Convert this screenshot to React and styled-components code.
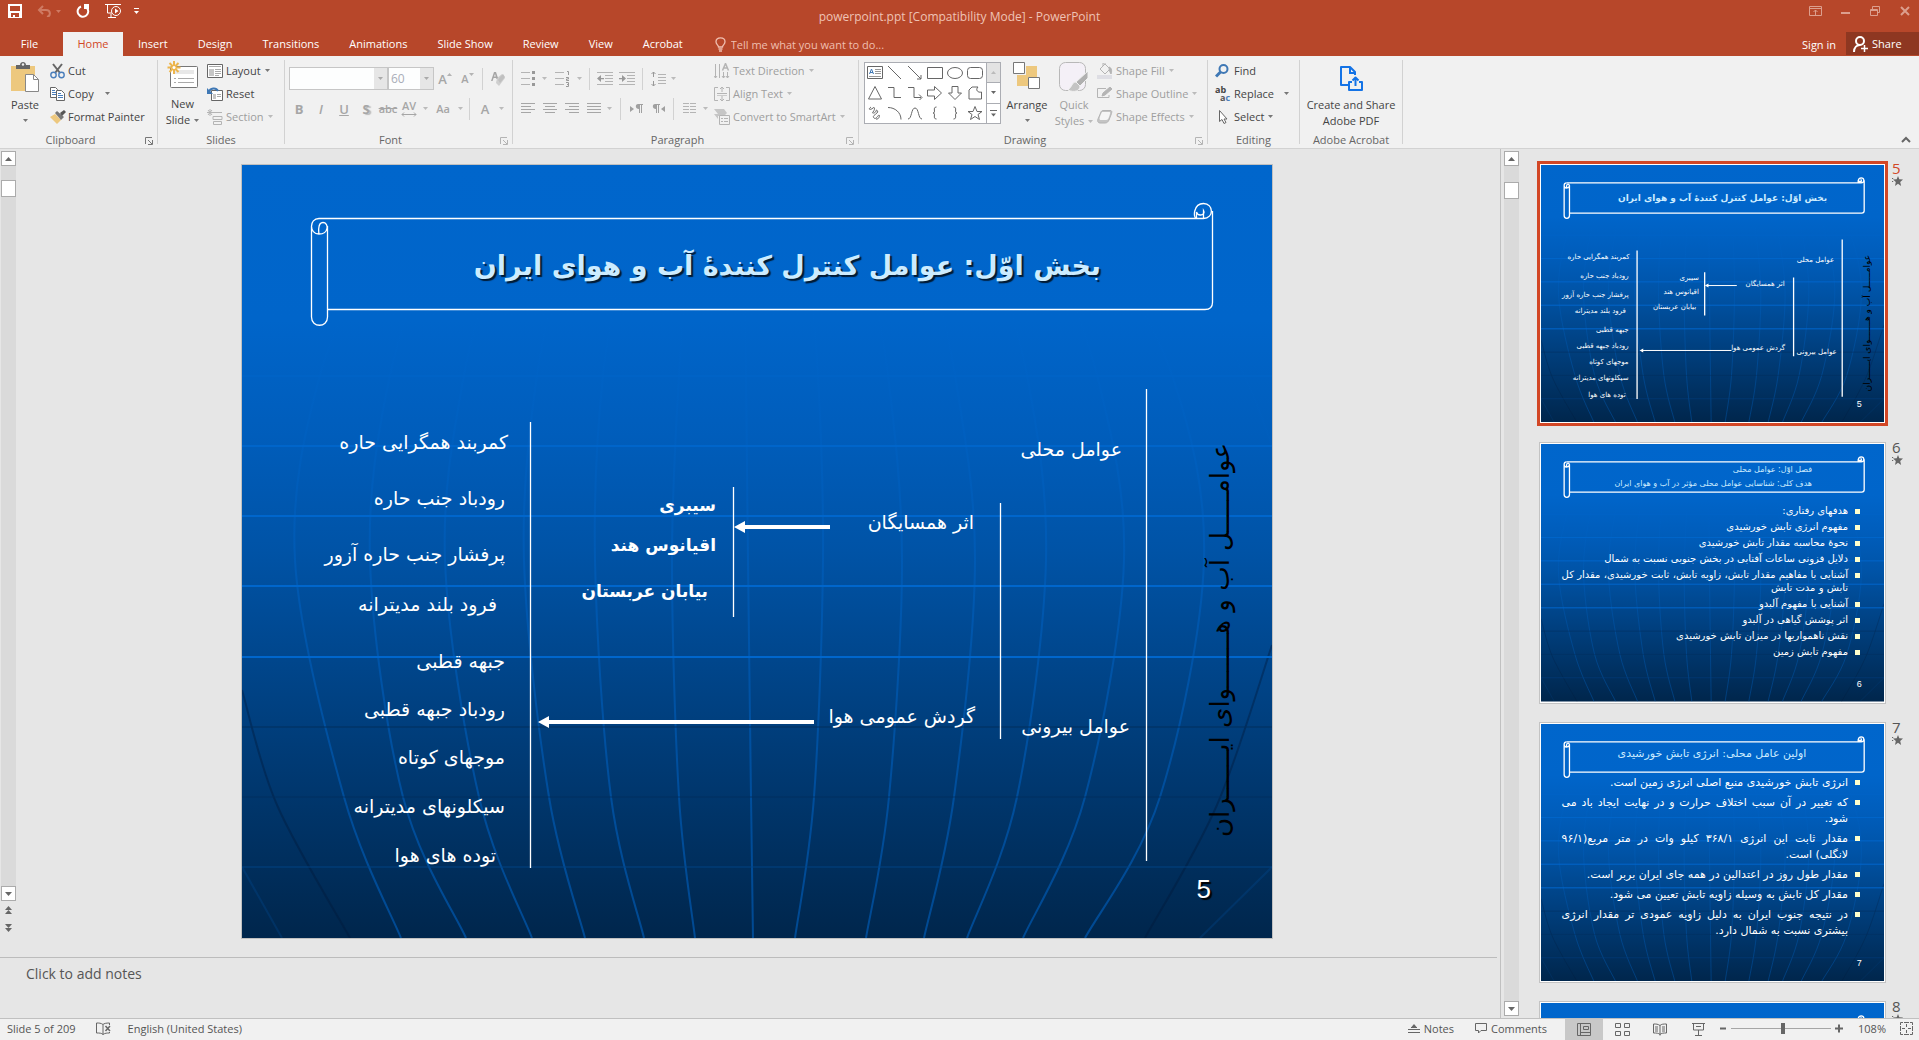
import React from "react";
import styled, { createGlobalStyle, css } from "styled-components";

const Global = createGlobalStyle`
  *, *::before, *::after { box-sizing: border-box; }
  html, body { margin: 0; height: 100%; }
  body { font-family: "Open Sans", "Noto Sans", sans-serif; font-size: 11px; color: #444; background: #e6e6e6; overflow: hidden; }
  button, input, select, textarea { font: inherit; color: inherit; margin: 0; padding: 0; border: 0; background: none; }
  svg { display: block; flex: none; }
`;

const INK = "#666";
const PALE = "#b4b4b4";

/* ---------- shell ---------- */
const Window = styled.div`
  display: flex;
  flex-direction: column;
  height: 100vh;
`;
const Header = styled.header`
  background: #b7472a;
  color: #fff;
`;
const TitleRow = styled.div`
  display: grid;
  grid-template-columns: 1fr auto 1fr;
  height: 32px;
`;
const Title = styled.h1`
  margin: 0;
  padding-top: 2px;
  font-size: 12px;
  font-weight: 400;
  line-height: 30px;
  color: #efc3b5;
`;
const QuickAccess = styled.div`
  display: flex;
  align-items: flex-start;
  padding: 3px 0 0 7px;
`;
const QuickButton = styled.button`
  display: flex;
  align-items: center;
  justify-content: center;
  width: ${(p) => p.$w}px;
  height: 16px;
  margin-right: ${(p) => p.$gap || 0}px;
  color: ${(p) => (p.$dim ? "#cf7b64" : "#fff")};
`;
const WindowButtons = styled.div`
  display: flex;
  justify-content: flex-end;
  gap: 14px;
  padding: 3px 6px 0 0;
  color: #dc9f8e;
`;
const WindowButton = styled.button`
  display: flex;
  align-items: center;
  justify-content: center;
  width: 16px;
  height: 16px;
`;
const TabRow = styled.nav`
  display: flex;
  height: 24px;
`;
const Tab = styled.button`
  height: 24px;
  padding: 0 14px;
  margin-right: 2px;
  line-height: 24px;
  color: ${(p) => (p.$active ? "#d24726" : "#fff")};
  background: ${(p) => (p.$active ? "#f1f1f1" : "transparent")};
  ${(p) => p.$file && css`width: 59px; margin-right: 4px;`}
  ${(p) => p.$active && css`width: 60px; padding: 0; margin-right: 1px;`}
`;
const TellMe = styled.label`
  display: flex;
  align-items: center;
  gap: 5px;
  flex: 1;
  padding-left: 16px;
  color: #f0bfb0;
  input { width: 200px; outline: 0; }
  input::placeholder { color: #f0bfb0; opacity: 1; }
`;
const SignIn = styled.button`
  padding: 0 10px;
`;
const Share = styled.button`
  display: flex;
  align-items: center;
  gap: 4px;
  width: 73px;
  height: 23px;
  padding-left: 7px;
  background: #8e3721;
`;

/* ---------- ribbon ---------- */
const Ribbon = styled.section`
  display: flex;
  height: 93px;
  background: #f1f1f1;
  border-bottom: 1px solid #d2d2d2;
`;
const Group = styled.section`
  display: flex;
  flex-direction: column;
  flex: none;
  width: ${(p) => p.$w}px;
  height: 84px;
  margin-top: 4px;
  border-right: 1px solid #d2d2d2;
`;
const GroupBody = styled.div`
  display: flex;
  height: 69px;
  padding-left: ${(p) => p.$pad || 0}px;
`;
const GroupFooter = styled.div`
  display: grid;
  grid-template-columns: ${(p) => (p.$launcher ? "1fr 16px" : "1fr")};
  height: 15px;
  padding-top: 3px;
`;
const GroupLabel = styled.h2`
  margin: 0;
  font-size: 11px;
  font-weight: 400;
  line-height: 16px;
  text-align: center;
  white-space: nowrap;
  color: #666;
`;
const Launcher = styled.button`
  width: 8px;
  height: 8px;
  margin: 5px 0 0 4px;
`;
const BigButton = styled.button`
  display: flex;
  flex-direction: column;
  align-items: center;
  width: ${(p) => p.$w}px;
  padding-top: ${(p) => p.$top || 2}px;
  line-height: 16px;
  color: ${(p) => (p.$dim ? "#9e9e9e" : "#444")};
`;
const BigIcon = styled.span`
  display: flex;
  justify-content: center;
  height: ${(p) => p.$h || 35}px;
  flex: none;
`;
const BigLine = styled.span`
  display: flex;
  align-items: center;
  gap: 4px;
  min-height: 14px;
  white-space: nowrap;
`;
const Stack = styled.div`
  display: flex;
  flex-direction: column;
  width: ${(p) => p.$w}px;
  margin-left: ${(p) => (p.$end ? "auto" : p.$left ? `${p.$left}px` : 0)};
`;
const RowButton = styled.button`
  display: flex;
  align-items: center;
  height: 23px;
  padding-bottom: 2px;
  white-space: nowrap;
  color: ${(p) => (p.$dim ? "#9e9e9e" : "#444")};
`;
const RowIcon = styled.span`
  display: flex;
  justify-content: flex-start;
  width: ${(p) => p.$w || 19}px;
`;
const RowText = styled.span`
  margin-right: ${(p) => p.$gap || 4}px;
`;
const ToolRows = styled.div`
  display: flex;
  flex-direction: column;
  gap: 7px;
  padding-top: 7px;
`;
const ToolRow = styled.div`
  display: flex;
  align-items: center;
  height: 23px;
`;
const Tool = styled.button`
  display: flex;
  align-items: center;
  justify-content: center;
  flex: none;
  width: ${(p) => p.$w || 22}px;
  height: 23px;
  color: #a6a6a6;
  font-size: 13px;
  font-weight: ${(p) => (p.$bold ? 700 : 600)};
  font-style: ${(p) => (p.$italic ? "italic" : "normal")};
  text-decoration: ${(p) => p.$line || "none"};
  text-shadow: ${(p) => (p.$shadow ? "2px 1px 1px #bbb" : "none")};
`;
const SmallTool = styled(Tool)`
  font-size: 11px;
`;
const Divider = styled.span`
  flex: none;
  width: 1px;
  height: 22px;
  margin: 0 ${(p) => p.$r}px 0 ${(p) => p.$l}px;
  background: #d2d2d2;
`;
const Combo = styled.span`
  display: flex;
  align-items: center;
  position: relative;
  width: ${(p) => p.$w}px;
  height: 23px;
  background: #fdfefe;
  border: 1px solid #c6c6c6;
  select {
    width: 100%;
    height: 21px;
    padding-left: 2px;
    appearance: none;
    color: #a9adb8;
    font-size: 12px;
    outline: 0;
    opacity: 1;
  }
`;
const ComboArrow = styled.span`
  position: absolute;
  right: 0;
  top: 0;
  display: flex;
  align-items: center;
  justify-content: center;
  width: 13px;
  height: 21px;
  background: #e6e6e6;
  pointer-events: none;
`;
const Gallery = styled.div`
  display: flex;
  width: 137px;
  height: 62px;
  margin: 2px 0 0 5px;
  background: #fff;
  border: 1px solid #abadb3;
`;
const ShapeGrid = styled.div`
  display: grid;
  grid-template-columns: repeat(6, 20px);
  grid-template-rows: repeat(3, 20px);
  flex: 1;
`;
const ShapeButton = styled.button`
  display: flex;
  align-items: center;
  justify-content: center;
`;
const GalleryScroll = styled.div`
  display: flex;
  flex-direction: column;
  width: 14px;
  border-left: 1px solid #abadb3;
`;
const GalleryStep = styled.button`
  display: flex;
  align-items: center;
  justify-content: center;
  flex: 1;
  background: ${(p) => (p.$off ? "#e3e3e3" : "#fff")};
  & + & { border-top: 1px solid #abadb3; }
`;
const Collapse = styled.button`
  align-self: flex-end;
  margin: 0 8px 4px auto;
`;

/* ---------- work area ---------- */
const Workspace = styled.main`
  display: flex;
  flex: 1;
  min-height: 0;
  background: #e6e6e6;
`;
const ScrollBar = styled.div`
  display: flex;
  flex-direction: column;
  flex: none;
  width: ${(p) => p.$w}px;
  padding: 2px 0 ${(p) => p.$bottom || 2}px ${(p) => p.$pad}px;
`;
const ScrollTrack = styled.div`
  flex: 1;
  background: #dadada;
  padding-top: ${(p) => p.$top}px;
`;
const ScrollThumb = styled.div`
  height: 17px;
  background: #fff;
  border: 1px solid #ababab;
`;
const ScrollButton = styled.button`
  display: flex;
  align-items: center;
  justify-content: center;
  width: 15px;
  height: 15px;
  background: #fff;
  border: 1px solid #ababab;
`;
const JumpButton = styled.button`
  display: flex;
  align-items: center;
  justify-content: center;
  width: 15px;
  height: 18px;
`;
const EditorColumn = styled.section`
  display: flex;
  flex-direction: column;
  flex: 1;
  min-width: 0;
`;
const EditorRow = styled.div`
  display: flex;
  flex: 1;
  min-height: 0;
`;
const Stage = styled.div`
  display: flex;
  justify-content: center;
  flex: 1;
  min-width: 0;
  padding: 16px 2px 19px 0;
`;
const NotesPane = styled.div`
  height: 61px;
  margin-right: 3px;
  border-top: 1px solid #bcbcbc;
  textarea {
    display: block;
    width: 100%;
    height: 58px;
    padding: 6px 26px;
    resize: none;
    outline: 0;
    font-size: 14px;
    line-height: 20px;
  }
  textarea::placeholder { color: #555; opacity: 1; }
`;
const SidePane = styled.aside`
  display: flex;
  flex: none;
  width: 419px;
  border-left: 1px solid #c0c0c0;
`;
const Thumbs = styled.ol`
  display: flex;
  flex-direction: column;
  gap: 14px;
  flex: 1;
  min-width: 0;
  margin: 0;
  padding: 12px 16px 0 18px;
  list-style: none;
  overflow: hidden;
`;
const ThumbItem = styled.li`
  display: flex;
  align-items: flex-start;
  gap: 4px;
`;
const ThumbFrame = styled.div`
  flex: 1;
  padding: ${(p) => (p.$active ? 0 : 2)}px;
  > div {
    border: ${(p) => (p.$active ? "3px solid #d24726" : "1px solid #c3c3c3")};
  }
`;
const ThumbMat = styled.div`
  padding: 1px;
  background: #fff;
`;
const ThumbInfo = styled.div`
  display: flex;
  flex-direction: column;
  align-items: flex-start;
  width: 11px;
  font-size: 15px;
  line-height: 15px;
  color: ${(p) => (p.$active ? "#d24726" : "#555")};
`;

/* ---------- slide ---------- */
const SlideBox = styled.article`
  position: relative;
  aspect-ratio: 1030 / 773;
  ${(p) => (p.$thumb ? css`width: 100%;` : css`height: 100%; outline: 1px solid #c0c0c0;`)}
  overflow: hidden;
  font-family: "DejaVu Sans", "Liberation Sans", sans-serif;
  color: #fff;
  > svg { position: absolute; inset: 0; width: 100%; height: 100%; }
`;
const Placed = styled.div`
  position: absolute;
  top: ${(p) => p.$y}%;
  right: ${(p) => p.$x}%;
  transform: translateY(-50%);
  direction: rtl;
  white-space: nowrap;
`;
const Label = styled(Placed)`
  font-size: ${(p) => (p.$thumb ? 7 : p.$bold ? 17 : 19)}px;
  font-weight: ${(p) => (p.$bold && !p.$thumb ? 700 : 400)};
`;
const Heading = styled(Placed)`
  font-size: ${(p) => p.$size}px;
  font-weight: ${(p) => (p.$bold ? 700 : 400)};
  line-height: ${(p) => (p.$thumb ? "14px" : "normal")};
  color: #ccecff;
  text-shadow: ${(p) => (p.$thumb ? "none" : "2px 2px 1px #001a33")};
`;
const SlideNumber = styled(Placed)`
  font-family: "Liberation Sans", sans-serif;
  font-size: ${(p) => (p.$thumb ? 9 : 26)}px;
  text-shadow: ${(p) => (p.$thumb ? "none" : "2px 2px 1px #000")};
`;
const Banner = styled.div`
  position: absolute;
  top: ${(p) => (p.$thumb ? 35 : 36)}%;
  right: 3%;
  writing-mode: vertical-rl;
  direction: rtl;
  transform: rotate(180deg);
  white-space: nowrap;
  color: #000;
  line-height: ${(p) => (p.$thumb ? 14 : 42)}px;
  font-size: ${(p) => (p.$thumb ? 9 : 26)}px;
`;
const Bullets = styled.ul`
  position: absolute;
  top: ${(p) => p.$top}%;
  left: 6%;
  right: 7%;
  display: flex;
  flex-direction: column;
  gap: ${(p) => p.$gap}px;
  margin: 0;
  padding: 0;
  list-style: none;
  direction: rtl;
  font-size: ${(p) => p.$size}px;
  line-height: ${(p) => p.$lh}px;
`;
const Bullet = styled.li`
  display: grid;
  grid-template-columns: 12px 1fr;
  &::before {
    content: "";
    width: 5px;
    height: 5px;
    margin-top: 5px;
    background: #ffffcc;
  }
`;
const BulletLine = styled.span`
  display: block;
  white-space: nowrap;
  text-align: justify;
  text-align-last: ${(p) => (p.$fill ? "justify" : "start")};
`;

/* ---------- status bar ---------- */
const StatusBar = styled.footer`
  display: flex;
  align-items: center;
  flex: none;
  height: 22px;
  padding-left: 7px;
  background: #f1f1f1;
  border-top: 1px solid #c0c0c0;
  color: #555;
`;
const StatusText = styled.span`
  margin-right: ${(p) => p.$gap || 0}px;
  padding-bottom: 2px;
  white-space: nowrap;
`;
const StatusButton = styled.button`
  display: flex;
  align-items: center;
  gap: 4px;
  margin-right: ${(p) => p.$gap || 0}px;
  padding-bottom: 2px;
`;
const ViewButton = styled.button`
  display: flex;
  align-items: center;
  justify-content: center;
  width: 38px;
  height: 21px;
  padding-bottom: 1px;
  background: ${(p) => (p.$active ? "#c8c8c8" : "transparent")};
`;
const Spring = styled.span`
  flex: 1;
`;
const Zoom = styled.input`
  appearance: none;
  width: 100px;
  height: 11px;
  margin: 0 4px 2px;
  background: linear-gradient(#a6a6a6, #a6a6a6) center / 100% 1px no-repeat;
  &::-webkit-slider-thumb {
    appearance: none;
    width: 4px;
    height: 11px;
    background: #666;
  }
`;

/* ---------- icons ---------- */
const I = ({ w = 16, h = 16, c = INK, s = 1, f = "none", children }) => (
  <svg width={w} height={h} viewBox={`0 0 ${w} ${h}`} fill={f} stroke={c} strokeWidth={s} aria-hidden="true">
    {children}
  </svg>
);
const Down = ({ c = "#777" }) => (
  <svg width="5" height="3" viewBox="0 0 5 3" fill={c} aria-hidden="true"><path d="M0 0h5L2.5 3z" /></svg>
);
const BigDown = ({ c = "#777", up }) => (
  <svg width="7" height="4" viewBox="0 0 7 4" fill={c} aria-hidden="true"><path d={up ? "M0 4h7L3.500 0z" : "M0 0h7L3.500 4z"} /></svg>
);
const Star = () => (
  <I w={11} h={10} c="none" f="#666"><path d="M6 0l1.300 3.300L11 3.600 8.200 6l.9 4L6 7.800 3 10l.8-4L1 3.600l3.700-.3zM0 2h1.200v1H0zM0 5h1.200v1H0z" /></I>
);
const lines = (arr) => arr.map(([x1, x2, y], i) => <path key={i} d={`M${x1} ${y}H${x2}`} />);

const PasteIcon = () => (
  <I w={30} h={31}>
    <path d="M1 4h24v25H1z" fill="#edc87e" stroke="none" />
    <path d="M6 7V3h4c0-4 6-4 6 0h4v4z" fill="#666" stroke="none" />
    <circle cx="13" cy="2.500" r="1.200" fill="#f1f1f1" stroke="none" />
    <path d="M15.500 12.500h8l5 5v12h-13z" fill="#fff" stroke="#888" />
    <path d="M23.500 12.500v5h5" stroke="#888" />
  </I>
);
const CutIcon = () => (
  <I w={15} h={16}>
    <path d="M3 1l7 9M12 1L5 10" strokeWidth="2" />
    <circle cx="3.500" cy="12" r="2.700" stroke="#4a7ebb" strokeWidth="1.400" /><circle cx="11.500" cy="12" r="2.700" stroke="#4a7ebb" strokeWidth="1.400" />
  </I>
);
const CopyIcon = () => (
  <I w={16} h={14}>
    <path d="M.5.5h5l2 2v8h-7z" fill="#fff" /><path d="M2 3.500h3M2 5.500h4M2 7.500h4" stroke="#4a7ebb" />
    <path d="M6.500 3.500h5l3 3v7h-8z" fill="#fff" /><path d="M8 6.500h3M8 8.500h5M8 10.500h5" stroke="#4a7ebb" />
  </I>
);
const PainterIcon = () => (
  <I w={16} h={14} c="none">
    <path d="M0 7l5-3 6 6-4 4z" fill="#edc87e" /><path d="M5 3l2-2 7 6-3 3z" fill="#777" /><path d="M10 3l4-3 2 2-4 4z" fill="#555" />
  </I>
);
const NewSlideIcon = () => (
  <I w={32} h={28}>
    <rect x="3.500" y="5.500" width="27" height="21" rx="1" fill="#fff" stroke="#777" />
    <path d="M7 9h20v4H7z" fill="#e8e8e8" stroke="none" />
    <path d="M7 17.500h2M11 17.500h16M7 21.500h2M11 21.500h16" stroke="#aaa" />
    <path d="M7 0v13M.5 6.500h13M2.500 2l9 9M11.500 2l-9 9" stroke="#edb54c" strokeWidth="2" />
    <circle cx="7" cy="6.500" r="1.500" fill="#fff" stroke="none" />
  </I>
);
const LayoutIcon = () => (
  <I w={16} h={14}><path d="M.5.500h15v13H.5z" fill="#fff" /><path d="M2 2.500h12" stroke="#aaa" /><path d="M2 5h5v7H2z" fill="#c6c6c6" stroke="none" /><path d="M8 5.500h6M8 7.500h6M8 9.500h6M8 11.500h4" stroke="#aaa" /></I>
);
const ResetIcon = () => (
  <I w={16} h={14}><path d="M4.500 3.500h11v10h-11z" fill="#fff" /><path d="M6 7h3v5H6z" fill="#c6c6c6" stroke="none" /><path d="M10 7.500h4M10 9.500h4" stroke="#aaa" /><path d="M2 5c1-4 7-5 9-1" stroke="#3f78b5" strokeWidth="2" /><path d="M0 1v6h6z" fill="#3f78b5" stroke="none" /></I>
);
const SectionIcon = () => (
  <I w={16} h={16} c={PALE}><path d="M3 0v7M0 3.500h6M1 1l4 5M5 1L1 6" /><path d="M6 3.500h9M6 7.500h9v3H6zM6.500 12.500h8v3h-8z" /></I>
);
const EraserIcon = () => (
  <I w={16} h={16} c="none" f={PALE}><path d="M7 7l5-4 3 4-6 8-3-3z" fill="#cfcfcf" /><path d="M10 6l3-3 2 3-5 6-2-3z" fill="#c0c0c0" /><path d="M1 10L4 1h2l2 6-1.500 1L6 7H3.600l-1 3zM4 5.500h1.800L5 3z" fill="#a6a6a6" /></I>
);
const GrowIcon = ({ down }) => (
  <I w={5} h={13} c="none" f={PALE}><path d={down ? "M0 1h5L2.500 4z" : "M0 4h5L2.500 1z"} /></I>
);
const KernIcon = () => (
  <I w={16} h={5} c="#a6a6a6"><path d="M1 2.500h14M3 .500l-2 2 2 2M13 .500l2 2-2 2" /></I>
);
const KernMark = styled.span`
  display: flex;
  flex-direction: column;
  align-items: center;
  line-height: 12px;
`;
const BulletIcon = () => (
  <I w={14} h={15} c={PALE}>{lines([[0, 9, 1.5], [0, 9, 7.5], [0, 9, 13.5]])}<path d="M11 0h3v3h-3zM11 6h3v3h-3zM11 12h3v3h-3z" fill="#999" stroke="none" /></I>
);
const NumberIcon = () => (
  <I w={15} h={16} c={PALE}>{lines([[0, 9, 1.5], [0, 9, 7.5], [0, 9, 13.5]])}<path d="M12 .5h1.500V4M11 6.500h2.500v1.500H11.500v1.500H14M11 11.500h2.500v4H11M12 13.500h1.500" stroke="#999" /></I>
);
const IndentIcon = ({ right }) => (
  <I w={16} h={13} c={PALE}>{lines([[0, 16, .5], [8, 16, 3.5], [8, 16, 6.5], [8, 16, 9.5], [0, 16, 12.5]])}<path d={right ? "M3 3l4 3.500-4 3.500zM0 6h4v1.200H0z" : "M4 3L0 6.500 4 10zM4 6h3v1.200H4z"} fill="#999" stroke="none" /></I>
);
const LineSpaceIcon = () => (
  <I w={15} h={16} c={PALE}>{lines([[7, 15, 3.5], [7, 15, 6.5], [7, 15, 9.5], [7, 15, 12.5]])}<path d="M2.500 1v5M.5 3l2-2 2 2M2.500 10v5M.5 13l2 2 2-2" stroke="#999" /></I>
);
const AlignIcon = ({ k }) => (
  <I w={14} h={11} c="#a6a6a6">
    {[0.5, 3.5, 6.5, 9.5].map((y, i) => {
      const short = i % 2 === 1 && k !== "j";
      const x1 = !short || k === "l" ? 0 : k === "c" ? 2 : 4;
      const x2 = !short || k === "r" ? 14 : k === "c" ? 12 : 10;
      return <path key={y} d={`M${x1} ${y}H${x2}`} />;
    })}
  </I>
);
const DirIcon = ({ rtl }) => (
  <I w={13} h={10} c="none" f="#a0a0a0"><path d={rtl ? "M13 2L9 5l4 3zM3 0h5v1H7v8H6V1H5v8H4V5C0 5 0 0 3 0z" : "M0 2l4 3-4 3zM8 0h5v1h-1v8h-1V1h-1v8H9V5C5 5 5 0 8 0z"} /></I>
);
const ColumnsIcon = () => <I w={13} h={11} c={PALE}>{lines([[0, 6, .5], [0, 6, 3.5], [0, 6, 6.5], [0, 6, 9.5], [7, 13, .5], [7, 13, 3.5], [7, 13, 6.5], [7, 13, 9.5]])}</I>;
const TextDirIcon = () => (
  <I w={16} h={16} c={PALE}><path d="M1.500 1v14M5.500 1v14M9.500 9v6M13.500 9v6M0 13l1.500 2L3 13M8 13l1.500 2 1.500-2M12 13l1.500 2 1.500-2" /><path d="M8.500 7.500L11.500.500l3 7M9.500 5h4" strokeWidth="1.500" /></I>
);
const AlignTextIcon = () => (
  <I w={16} h={16} c={PALE}><path d="M4 1.500H.500v13H4M12 1.500h3.500v13H12M3 7.500h10M8 1v5M6 3l2-2 2 2M8 9v6M6 13l2 2 2-2" /><path d="M3 9.500h10" stroke="#ccc" /></I>
);
const SmartIcon = () => (
  <I w={16} h={16} c={PALE}><path d="M0 0h10l3 4-3 3H4v3L0 5h4z" fill="#c6c6c6" stroke="none" /><path d="M5.500 6.500h10v9h-10z" fill="#f1f1f1" /><path d="M7 9.500h2M10 9.500h4M7 12.500h2M10 12.500h4" /></I>
);
const shapes = [
  <><path d="M.5.500h15v12H.500z" /><path d="M2.500 8l2-5 2 5M3 6.500h3" stroke="#3f78b5" /><path d="M8 3.500h6M8 5.500h6M2 10.500h12M8 7.500h6" stroke="#999" /></>,
  <path d="M1 0l13 13" />,
  <><path d="M1 0l13 13" /><path d="M14 9v4h-4" /></>,
  <path d="M.5 1.500h15v11H.500z" />,
  <ellipse cx="8" cy="7" rx="7.500" ry="5.500" />,
  <rect x=".5" y="1.500" width="15" height="11" rx="3" />,
  <path d="M8 .500l6.500 12.500h-13z" />,
  <path d="M1 1.500h6v10h7" />,
  <><path d="M1 1.500h6v10h7" /><path d="M12 8.500l3 3-3 3" /></>,
  <path d="M.5 4h7V.500L14.500 7l-7 6.500V10h-7z" />,
  <path d="M5 .500h6V7h3.500L8 13.500 1.500 7H5z" />,
  <path d="M2 4l3-3h6c-3 3 0 6 3.500 5v7H2z" />,
  <path d="M4 1c-4 3 0 3 2 1s2 2 0 4 3 1 3-1 3 0 1 2-5 3-3 5 4-3 5-3 0 5-3 4" />,
  <path d="M1 1.500c7 0 13 5 13 12" />,
  <path d="M1 13c4 0 3-11 7-11s3 11 7 11" />,
  <path d="M9.500 1C5 1 9.500 7 6 7c3.500 0-1 6 3.500 6" />,
  <path d="M6.500 1C11 1 6.500 7 10 7c-3.500 0 1 6-3.500 6" />,
  <path d="M8 .500l2 5h5l-4 3 1.500 5L8 10.500l-4.500 3L5 8.500l-4-3h5z" />,
];
const ArrangeIcon = () => (
  <I w={28} h={28}><path d="M13 4h11v11H13zM4 13h11v11H4z" fill="#edc87e" stroke="none" /><path d="M.5.500h11v11H.500zM15.500 15.500h11v11h-11z" fill="#fff" stroke="#777" /></I>
);
const StylesIcon = () => (
  <I w={30} h={31} c="#b8b8b8"><rect x=".5" y=".5" width="26" height="28" rx="6" fill="#f4f0f7" /><path d="M29 9v7l-8 8-4-4z" fill="#b0b0b0" stroke="#f1f1f1" /><path d="M17 20c-4 0-4 5-8 8 6 3 12 1 12-4z" fill="#c4c4c4" stroke="#f1f1f1" /></I>
);
const FillIcon = () => (
  <I w={16} h={16} c={PALE}><path d="M3 6l5-5 5 5-5 5zM6 3V0h3" /><path d="M12 4c3 1 3 4 2 7-1-2-2-3-2-7z" fill={PALE} /><path d="M0 12h15v4H0z" fill="#dedee4" stroke="none" /></I>
);
const OutlineIcon = () => (
  <I w={16} h={14} c={PALE}><path d="M9 1.500H.500v9H12V8" /><path d="M5 9l1-3 7-6 2 2-7 6z" fill={PALE} /></I>
);
const EffectsIcon = () => (
  <I w={16} h={14} c={PALE}><path d="M1 9l3-7c.5-1 1-1.500 2-1.500h7c2 0 2 1 1.500 3L12 10c-1 2-2 3-4 3H3c-2 0-3-2-2-4z" fill="#c4c4c4" /><path d="M5 2h7c2 0 1 2 0 5s-2 3-4 3H4C2 10 2 8 5 2z" fill="#f6f6f6" stroke="none" /></I>
);
const FindIcon = () => <I w={14} h={14} c="#3f78b5" s={2}><circle cx="8.500" cy="5" r="4" /><path d="M5.500 8L1 12.500" strokeWidth="3" /></I>;
const ReplaceMark = styled.span`
  display: flex;
  flex-direction: column;
  font-size: 9px;
  font-weight: 700;
  line-height: 8px;
  text-align: left;
  span { padding-left: 5px; color: #555; }
  i { font-style: normal; color: #4a7ebb; }
`;
const SelectIcon = () => <I w={14} h={16}><path d="M4.500 1.500v11l2.500-2 2 4 2-1-2-3.500h3z" fill="#fff" /></I>;
const PdfIcon = () => (
  <I w={25} h={26} c="#1473e6" s={2}><path d="M9 20H2V2h9l5 5v3" strokeLinejoin="round" /><path d="M11 2v6h5" /><path d="M13 17h-3v8h13v-8h-3M16.500 21v-8M13.500 15.500l3-3 3 3" strokeLinejoin="round" /></I>
);

/* ---------- ribbon groups ---------- */
const RibbonGroup = ({ title, width, launcher, pad, children }) => (
  <Group $w={width} aria-label={title}>
    <GroupBody $pad={pad}>{children}</GroupBody>
    <GroupFooter $launcher={launcher}>
      <GroupLabel>{title}</GroupLabel>
      {launcher && (
        <Launcher aria-label={`${title} settings`}>
          <I w={8} h={8} c={launcher}><path d="M.5 7V.500H7M3 3l4 4M7.500 3v4.500H3" /></I>
        </Launcher>
      )}
    </GroupFooter>
  </Group>
);
const Row = ({ icon, text, arrow, gap, dim, iw }) => (
  <RowButton $dim={dim}>
    <RowIcon $w={iw}>{icon}</RowIcon>
    <RowText $gap={gap}>{text}</RowText>
    {arrow && <Down c={dim ? "#bbb" : "#777"} />}
  </RowButton>
);
const ToolArrow = ({ label, w = 12 }) => <Tool $w={w} aria-label={label}><Down c="#bbb" /></Tool>;

function HomeRibbon() {
  return (
    <Ribbon aria-label="Home">
      <RibbonGroup title="Clipboard" width={158} launcher="#777">
        <BigButton $w={50}><BigIcon><PasteIcon /></BigIcon><BigLine>Paste</BigLine><BigLine><Down /></BigLine></BigButton>
        <Stack $w={100}>
          <Row icon={<CutIcon />} text="Cut" iw={18} />
          <Row icon={<CopyIcon />} text="Copy" arrow gap={11} iw={18} />
          <Row icon={<PainterIcon />} text="Format Painter" iw={18} />
        </Stack>
      </RibbonGroup>
      <RibbonGroup title="Slides" width={127}>
        <BigButton $w={49} $top={1}><BigIcon><NewSlideIcon /></BigIcon><BigLine>New</BigLine><BigLine>Slide <Down /></BigLine></BigButton>
        <Stack $w={76}>
          <Row icon={<LayoutIcon />} text="Layout" arrow />
          <Row icon={<ResetIcon />} text="Reset" />
          <Row icon={<SectionIcon />} text="Section" arrow dim />
        </Stack>
      </RibbonGroup>
      <RibbonGroup title="Font" width={228} launcher={PALE} pad={4}>
        <ToolRows>
          <ToolRow>
            <Combo $w={99}><select aria-label="Font" defaultValue=""><option value="" /></select><ComboArrow><Down c="#aaa" /></ComboArrow></Combo>
            <Combo $w={46}><select aria-label="Font size" defaultValue="60"><option>60</option></select><ComboArrow><Down c="#aaa" /></ComboArrow></Combo>
            <Tool aria-label="Increase font size">A<GrowIcon /></Tool>
            <SmallTool $w={23} aria-label="Decrease font size">A<GrowIcon down /></SmallTool>
            <Divider $l={3} $r={4} />
            <Tool aria-label="Clear formatting"><EraserIcon /></Tool>
          </ToolRow>
          <ToolRow>
            <Tool $bold $w={20}>B</Tool>
            <Tool $italic $w={24}>I</Tool>
            <Tool $line="underline">U</Tool>
            <Tool $bold $w={22} $shadow>S</Tool>
            <SmallTool $w={22} $line="line-through">abc</SmallTool>
            <SmallTool $w={20}><KernMark>AV<KernIcon /></KernMark></SmallTool>
            <ToolArrow label="Spacing options" />
            <SmallTool $w={24}>Aa</SmallTool>
            <ToolArrow label="Case options" w={10} />
            <Divider $l={4} $r={4} />
            <Tool $w={22}>A</Tool>
            <ToolArrow label="Colour options" w={10} />
          </ToolRow>
        </ToolRows>
      </RibbonGroup>
      <RibbonGroup title="Paragraph" width={346} launcher={PALE} pad={4}>
        <ToolRows>
          <ToolRow>
            <Tool $w={21} aria-label="Bullets"><BulletIcon /></Tool><ToolArrow label="Bullet options" />
            <Tool $w={24} aria-label="Numbering"><NumberIcon /></Tool><ToolArrow label="Numbering options" w={10} />
            <Divider $l={5} $r={4} />
            <Tool aria-label="Decrease indent"><IndentIcon /></Tool><Tool aria-label="Increase indent"><IndentIcon right /></Tool>
            <Divider $l={4} $r={4} />
            <Tool aria-label="Line spacing"><LineSpaceIcon /></Tool><ToolArrow label="Line spacing options" w={8} />
          </ToolRow>
          <ToolRow>
            <Tool aria-label="Align left"><AlignIcon k="l" /></Tool><Tool aria-label="Center"><AlignIcon k="c" /></Tool>
            <Tool aria-label="Align right"><AlignIcon k="r" /></Tool><Tool aria-label="Justify"><AlignIcon k="j" /></Tool>
            <ToolArrow label="Justify options" w={8} />
            <Divider $l={7} $r={4} />
            <Tool aria-label="Left to right"><DirIcon /></Tool><Tool aria-label="Right to left"><DirIcon rtl /></Tool>
            <Divider $l={4} $r={4} />
            <Tool aria-label="Columns"><ColumnsIcon /></Tool><ToolArrow label="Column options" w={10} />
          </ToolRow>
        </ToolRows>
        <Stack $w={144} $end>
          <Row icon={<TextDirIcon />} text="Text Direction" arrow dim />
          <Row icon={<AlignTextIcon />} text="Align Text" arrow dim />
          <Row icon={<SmartIcon />} text="Convert to SmartArt" arrow dim />
        </Stack>
      </RibbonGroup>
      <RibbonGroup title="Drawing" width={349} launcher={PALE}>
        <Gallery>
          <ShapeGrid>
            {shapes.map((s, i) => (
              <ShapeButton key={i} aria-label={`Shape ${i + 1}`}><I w={16} h={14}>{s}</I></ShapeButton>
            ))}
          </ShapeGrid>
          <GalleryScroll>
            <GalleryStep $off aria-label="Previous shapes"><svg width="5" height="3" fill="#bbb"><path d="M0 3h5L2.500 0z" /></svg></GalleryStep>
            <GalleryStep aria-label="Next shapes"><Down c="#666" /></GalleryStep>
            <GalleryStep aria-label="All shapes"><I w={7} h={7} c="#666"><path d="M0 .500h7" /><path d="M1 3.500h5L3.500 6.500z" fill="#666" stroke="none" /></I></GalleryStep>
          </GalleryScroll>
        </Gallery>
        <BigButton $w={52}><BigIcon><ArrangeIcon /></BigIcon><BigLine>Arrange</BigLine><BigLine><Down /></BigLine></BigButton>
        <BigButton $w={42} $dim><BigIcon><StylesIcon /></BigIcon><BigLine>Quick</BigLine><BigLine>Styles <Down c="#bbb" /></BigLine></BigButton>
        <Stack $w={108} $left={2}>
          <Row icon={<FillIcon />} text="Shape Fill" arrow dim />
          <Row icon={<OutlineIcon />} text="Shape Outline" arrow dim />
          <Row icon={<EffectsIcon />} text="Shape Effects" arrow dim />
        </Stack>
      </RibbonGroup>
      <RibbonGroup title="Editing" width={92} pad={7}>
        <Stack $w={84}>
          <Row icon={<FindIcon />} text="Find" />
          <Row icon={<ReplaceMark>ab<span>a<i>c</i></span></ReplaceMark>} text="Replace" arrow gap={10} />
          <Row icon={<SelectIcon />} text="Select" arrow />
        </Stack>
      </RibbonGroup>
      <RibbonGroup title="Adobe Acrobat" width={103}>
        <BigButton $w={102} $top={5}><BigIcon $h={32}><PdfIcon /></BigIcon><BigLine>Create and Share</BigLine><BigLine>Adobe PDF</BigLine></BigButton>
      </RibbonGroup>
      <Collapse aria-label="Collapse the ribbon"><I w={10} h={8} s={2}><path d="M1 6l4-4 4 4" /></I></Collapse>
    </Ribbon>
  );
}

/* ---------- slides ---------- */
// Each meridian is sampled at these heights, in slide units.
const LEVELS = [60, 210, 395, 632, 773];
const MERIDIANS = [
  [143, 78, 53, 102, 159], [198, 148, 128, 161, 224], [263, 222, 203, 237, 290], [328, 295, 282, 307, 343],
  [388, 361, 353, 369, 402], [448, 437, 430, 437, 453], [502, 504, 506, 509, 511], [563, 576, 581, 572, 553],
  [620, 646, 660, 647, 624], [680, 713, 733, 712, 682], [742, 785, 804, 775, 725], [800, 855, 882, 843, 781],
  [850, 930, 962, 918, 843],
];
const EDGES = [[[0, 525], [35, 640], [108, 773]], [[1030, 480], [975, 640], [903, 773]]];
const curve = (pts) => {
  let d = `M${pts[0][0]} ${pts[0][1]}`;
  for (let i = 0; i < pts.length - 1; i++) {
    const a = pts[i - 1] || pts[i], b = pts[i], c = pts[i + 1], e = pts[i + 2] || c;
    d += `C${b[0] + (c[0] - a[0]) / 6} ${b[1] + (c[1] - a[1]) / 6} ${c[0] - (e[0] - b[0]) / 6} ${c[1] - (e[1] - b[1]) / 6} ${c[0]} ${c[1]}`;
  }
  return d;
};
const PARALLELS = [[211, "#0064c8", 0.7], [281, "#0066cc", 0.9], [351, "#0066cc", 1], [421, "#0066cc", 1], [492, "#0066cc", 1], [562, "#002d5c", 0.5], [632, "#002d5c", 0.4], [702, "#004488", 0.45]];

function Backdrop({ id, thumb, diagram }) {
  const w = thumb ? 3 : 1;
  return (
    <svg viewBox="0 0 1030 773" preserveAspectRatio="none" fill="none" aria-hidden="true">
      <defs>
        <linearGradient id={`${id}-bg`} x1="0" y1="0" x2="0" y2="1">
          <stop offset="0" stopColor="#0066cc" /><stop offset=".2" stopColor="#0065ca" /><stop offset=".35" stopColor="#005dbb" />
          <stop offset=".5" stopColor="#0053a6" /><stop offset=".75" stopColor="#003c78" /><stop offset="1" stopColor="#00264c" />
        </linearGradient>
        <linearGradient id={`${id}-ln`} gradientUnits="userSpaceOnUse" x1="0" y1="60" x2="0" y2="773">
          <stop offset="0" stopColor="#0066cc" stopOpacity="0" /><stop offset=".5" stopColor="#0066cc" stopOpacity=".4" /><stop offset="1" stopColor="#0066cc" stopOpacity=".55" />
        </linearGradient>
      </defs>
      <path d="M0 0h1030v773H0z" fill={`url(#${id}-bg)`} />
      <g stroke={`url(#${id}-ln)`} strokeWidth="2">
        {MERIDIANS.map((m, i) => <path key={i} d={curve(m.map((x, j) => [x, LEVELS[j]]))} />)}
        <path d="M0 702l40 71M1030 702l-72 71M910 60q110 140 140 300" strokeOpacity=".3" />
      </g>
      <g stroke="#001a3a" strokeOpacity=".4" strokeWidth="2">{EDGES.map((e, i) => <path key={i} d={curve(e)} />)}</g>
      {PARALLELS.map(([y, c, o]) => <path key={y} d={`M0 ${y}H1030`} stroke={c} strokeOpacity={o} strokeWidth={thumb ? 3 : 2} />)}
      <g stroke="#fff" strokeWidth={w * 1.3}>
        <path d="M77 53.500H961.500C972 53.500 972 38.500 961.500 38.500S951 53.500 954.500 53.500M954.500 53V47C956 52 964 50 961.500 45.500V53M970.500 46V137.500Q970.500 144.500 963 144.500H85.500" />
        <path d="M77 53.500C67 53.500 67 69 77 69S87 57.500 81 57.500 77 69 77 69M69.500 61V152C69.500 163 85.500 163 85.500 152V61" />
      </g>
      {diagram && (
        <g stroke="#fff" strokeWidth={w * 1.3}>
          <path d="M288.500 257V703M491.500 322V452M758.500 338V574M904.500 224V696" />
          <path d="M500 362H588M306 557H572" strokeWidth={thumb ? 3 : 4} />
          <path d="M492 362l11-6v12zM296 557l11-6v12z" fill="#fff" stroke="none" />
        </g>
      )}
    </svg>
  );
}

const X = (px) => ((1030 - px) / 1030) * 100;
const Y = (px) => (px / 773) * 100;
// text, right edge, baseline, bold
const LABELS = [
  ["کمربند همگرایی حاره", 266, 283], ["رودباد جنب حاره", 263, 339], ["پرفشار جنب حاره آزور", 263, 395],
  ["فرود بلند مدیترانه", 255, 445], ["جبهه قطبی", 263, 502], ["رودباد جبهه قطبی", 263, 550],
  ["موجهای کوتاه", 263, 598], ["سیکلونهای مدیترانه", 263, 647], ["توده های هوا", 254, 696],
  ["سیبری", 474, 346, 1], ["اقیانوس هند", 474, 386, 1], ["بیابان عربستان", 466, 432, 1],
  ["اثر همسایگان", 732, 363], ["عوامل محلی", 880, 290], ["عوامل بیرونی", 888, 567], ["گردش عمومی هوا", 733, 557],
];

const DiagramSlide = ({ thumb }) => (
  <SlideBox $thumb={thumb} lang="fa">
    <Backdrop id={thumb ? "t5" : "main"} thumb={thumb} diagram />
    <Heading $thumb={thumb} $bold $size={thumb ? 9 : 27} $x={X(859)} $y={Y(100)}>بخش اوّل: عوامل کنترل کنندۀ آب و هوای ایران</Heading>
    {LABELS.map(([text, x, y, bold]) => (
      <Label key={text} $thumb={thumb} $bold={bold} $x={X(x)} $y={Y(y - 6)}>{text}</Label>
    ))}
    <Banner $thumb={thumb}>عوامـــــل آب و هـــــــوای ایــــــران</Banner>
    <SlideNumber $thumb={thumb} $x={X(thumb ? 963 : 969)} $y={Y(thumb ? 719 : 724)}>5</SlideNumber>
  </SlideBox>
);

const TextSlide = ({ n, title, titleRight, titleY, titleSize, top, size, lh, gap, items }) => (
  <SlideBox $thumb lang="fa">
    <Backdrop id={`t${n}`} thumb />
    {title && <Heading $thumb $size={titleSize} $x={X(titleRight)} $y={Y(titleY)}>{title.map((t) => <div key={t}>{t}</div>)}</Heading>}
    {items && (
      <Bullets $top={top} $size={size} $lh={lh} $gap={gap}>
        {items.map((ls) => (
          <Bullet key={ls[0]}>
            <div>{ls.map((l, i) => <BulletLine key={l} $fill={i < ls.length - 1}>{l}</BulletLine>)}</div>
          </Bullet>
        ))}
      </Bullets>
    )}
    <SlideNumber $thumb $x={X(963)} $y={Y(719)}>{n}</SlideNumber>
  </SlideBox>
);

const SLIDE6 = [
  ["هدفهای رفتاری:"], ["مفهوم انرژی تابش خورشیدی"], ["نحوۀ محاسبه مقدار تابش خورشیدی"],
  ["دلایل فزونی ساعات آفتابی در بخش جنوبی نسبت به شمال"],
  ["آشنایی با مفاهیم مقدار تابش، زاویه تابش، ثابت خورشیدی، مقدار کل", "تابش و مدت تابش"],
  ["آشنایی با مفهوم آلبدو"], ["اثر پوشش گیاهی در آلبدو"], ["نقش ناهمواریها در میزان تابش خورشیدی"], ["مفهوم تابش زمین"],
];
const SLIDE7 = [
  ["انرژی تابش خورشیدی منبع اصلی انرژی زمین است."],
  ["که تغییر در آن سبب اختلاف حرارت و در نهایت ایجاد باد می", "شود."],
  ["مقدار ثابت این انرژی ۳۶۸/۱ کیلو وات در متر مربع(۹۶/۱", "لانگلی) است."],
  ["مقدار طول روز در اعتدالین در همه جای ایران بربر است."],
  ["مقدار کل تابش به وسیله زاویه تابش تعیین می شود."],
  ["در نتیجه جنوب ایران به دلیل زاویه عمودی تر مقدار انرژی", "بیشتری نسبت به شمال دارد."],
];

const Thumb = ({ n, active, children }) => (
  <ThumbItem>
    <ThumbFrame $active={active}><ThumbMat>{children}</ThumbMat></ThumbFrame>
    <ThumbInfo $active={active}>{n}<Star /></ThumbInfo>
  </ThumbItem>
);

const TABS = ["Insert", "Design", "Transitions", "Animations", "Slide Show", "Review", "View", "Acrobat"];

export default function App() {
  return (
    <Window>
      <Global />
      <Header>
        <TitleRow>
          <QuickAccess>
            <QuickButton $w={16} $gap={13} aria-label="Save">
              <I w={14} h={14} c="none" f="#fff"><path fillRule="evenodd" d="M0 0h14v14H0zM2 2v5h10V2zM3 9v4h2v-2h2v2h4V9z" /></I>
            </QuickButton>
            <QuickButton $w={16} $dim aria-label="Undo">
              <I w={15} h={12} c="#cf7b64" s={2}><path d="M2 5h7c5 0 5 6 1 7" /><path d="M6 1L2 5l4 4" /></I>
            </QuickButton>
            <QuickButton $w={13} $gap={10} aria-label="Undo options"><Down c="#cf7b64" /></QuickButton>
            <QuickButton $w={16} $gap={13} aria-label="Repeat">
              <I w={14} h={14} c="#fff" s={2}><path d="M5 2.500A5.300 5.300 0 1 0 10.500 3.500" /><path d="M8 0h5v5H8z" fill="#fff" stroke="none" /></I>
            </QuickButton>
            <QuickButton $w={18} $gap={8} aria-label="Start slide show">
              <I w={17} h={16} c="#fff"><path d="M0 1.500h16M2.500 2v8H7M3 14.500h8M6 11v4" /><circle cx="11" cy="8" r="4.500" /><path d="M10 5.500v5l3.500-2.500z" fill="#fff" stroke="none" /></I>
            </QuickButton>
            <QuickButton $w={12} aria-label="Customize toolbar">
              <I w={5} h={6} c="#fff"><path d="M0 .500h5" /><path d="M0 3h5L2.500 6z" fill="#fff" stroke="none" /></I>
            </QuickButton>
          </QuickAccess>
          <Title>powerpoint.ppt [Compatibility Mode] - PowerPoint</Title>
          <WindowButtons>
            <WindowButton aria-label="Ribbon display options"><I w={13} h={10} c="#dc9f8e"><path d="M.5.500h12v9H.500zM0 2.500h13M6.500 4v5M4.500 6l2-2 2 2" /></I></WindowButton>
            <WindowButton aria-label="Minimize"><I w={9} h={8} c="#dc9f8e" s={2}><path d="M0 6h9" /></I></WindowButton>
            <WindowButton aria-label="Restore"><I w={10} h={10} c="#dc9f8e"><path d="M.5 3.500h7v6h-7zM.5 4.500h7M2.500 3V.500h7v6H8" /></I></WindowButton>
            <WindowButton aria-label="Close"><I w={10} h={10} c="#dc9f8e" s={2}><path d="M1 1l8 8M9 1L1 9" /></I></WindowButton>
          </WindowButtons>
        </TitleRow>
        <TabRow>
          <Tab $file>File</Tab>
          <Tab $active>Home</Tab>
          {TABS.map((t) => <Tab key={t}>{t}</Tab>)}
          <TellMe>
            <I w={11} h={15} c="#f0bfb0"><path d="M3.500 10C3.500 8 1 7.500 1 4.800 1 -.5 10 -.5 10 4.800 10 7.500 7.500 8 7.500 10zM3.500 12h4M4 14h3" strokeWidth="1.300" /></I>
            <input aria-label="Tell me what you want to do" placeholder="Tell me what you want to do..." />
          </TellMe>
          <SignIn>Sign in</SignIn>
          <Share><I w={15} h={16} c="#fff" s={2}><circle cx="7" cy="5" r="4" /><path d="M1 16c0-5 3-7 6-7" /><path d="M11.500 9v7M8 12.500h7" strokeWidth="1.500" /></I>Share</Share>
        </TabRow>
      </Header>
      <HomeRibbon />
      <Workspace>
        <EditorColumn>
          <EditorRow>
            <ScrollBar $w={16} $pad={1} $bottom={20}>
              <ScrollButton aria-label="Scroll up"><BigDown c="#666" up /></ScrollButton>
              <ScrollTrack $top={14}><ScrollThumb /></ScrollTrack>
              <ScrollButton aria-label="Scroll down"><BigDown c="#666" /></ScrollButton>
              <JumpButton aria-label="Previous slide"><I w={7} h={8} c="none" f="#666"><path d="M0 4h7L3.500 0zM0 8h7L3.500 4z" /></I></JumpButton>
              <JumpButton aria-label="Next slide"><I w={7} h={8} c="none" f="#666"><path d="M0 0h7L3.500 4zM0 4h7L3.500 8z" /></I></JumpButton>
            </ScrollBar>
            <Stage><DiagramSlide /></Stage>
          </EditorRow>
          <NotesPane><textarea aria-label="Notes" placeholder="Click to add notes" /></NotesPane>
        </EditorColumn>
        <SidePane>
          <ScrollBar $w={18} $pad={3}>
            <ScrollButton aria-label="Scroll slides up"><BigDown c="#666" up /></ScrollButton>
            <ScrollTrack $top={16}><ScrollThumb /></ScrollTrack>
            <ScrollButton aria-label="Scroll slides down"><BigDown c="#666" /></ScrollButton>
          </ScrollBar>
          <Thumbs>
            <Thumb n={5} active><DiagramSlide thumb /></Thumb>
            <Thumb n={6}>
              <TextSlide n={6} title={["فصل اوّل: عوامل محلی", "هدف کلی: شناسایی عوامل محلی مؤثر در آب و هوای ایران"]} titleRight={814} titleY={98} titleSize={8} top={23} size={10} lh={13} gap={3} items={SLIDE6} />
            </Thumb>
            <Thumb n={7}>
              <TextSlide n={7} title={["اولین عامل محلی: انرژی تابش خورشیدی"]} titleRight={797} titleY={91} titleSize={11} top={20} size={11} lh={16} gap={4} items={SLIDE7} />
            </Thumb>
            <Thumb n={8}><TextSlide n={8} /></Thumb>
          </Thumbs>
        </SidePane>
      </Workspace>
      <StatusBar>
        <StatusText $gap={20}>Slide 5 of 209</StatusText>
        <StatusButton $gap={17} aria-label="Spelling"><I w={15} h={13}><path d="M7 2.500C5 1 3 1 .500 1v10c3 0 5 0 6.500 1.500V2.500M7 2.500C8 1.500 10 1 13.500 1v2M7 12.500c2-1.500 4-1.500 6.500-1.500V10" /><path d="M9.500 4l4.500 5M14 4L9.500 9" strokeWidth="1.500" /></I></StatusButton>
        <StatusText>English (United States)</StatusText>
        <Spring />
        <StatusButton $gap={21}><I w={12} h={11}><path d="M0 6.500h12M0 9.500h12M3 4.500h6" /><path d="M3.500 4L6 1l2.500 3z" fill={INK} stroke="none" /></I>Notes</StatusButton>
        <StatusButton $gap={18}><I w={12} h={12}><path d="M.5.500h11v7H6L3.500 10V7.500h-3z" /></I>Comments</StatusButton>
        <ViewButton $active aria-label="Normal view"><I w={15} h={13}><path d="M.5.500h13v12H.500zM3.500.500v12M3.500 9.500h10M6.500 3.500h5v3h-5z" /></I></ViewButton>
        <ViewButton aria-label="Slide sorter"><I w={15} h={13}><path d="M.5.500h5v4h-5zM9.500.500h5v4h-5zM.5 8.500h5v4h-5zM9.500 8.500h5v4h-5z" /></I></ViewButton>
        <ViewButton aria-label="Reading view"><I w={14} h={13}><path d="M7 2.500C5 1 3 1 .5 1v9c3 0 5 0 6.500 1.500C8.500 10 10.500 10 13.500 10V1C10.500 1 8.500 1 7 2.500v10M2 4h3M2 6h3M2 8h3M9 4h3M9 6h3M9 8h3" /></I></ViewButton>
        <ViewButton aria-label="Slide show"><I w={13} h={13}><path d="M0 .500h13M1.500 1v6h10V1M6.500 7v5M3 12.500h7M4 3.500h5" /></I></ViewButton>
        <StatusButton aria-label="Zoom out"><I w={10} h={9} s={2}><path d="M3 4.500h6" /></I></StatusButton>
        <Zoom type="range" aria-label="Zoom" min="0" max="100" defaultValue="52" />
        <StatusButton $gap={14} aria-label="Zoom in"><I w={9} h={9} s={2}><path d="M0 4.500h8M4 .500v8" /></I></StatusButton>
        <StatusButton $gap={14}>108%</StatusButton>
        <StatusButton $gap={6} aria-label="Fit slide to window"><I w={13} h={13}><path d="M.500 3V.500H3M10 .500h2.500V3M12.500 10v2.500H10M3 12.500H.500V10M6.500 2v3M6.500 8v3M2 6.500h3M8 6.500h3M.5 4v5M12.500 4v5M4 .500h5M4 12.500h5" /></I></StatusButton>
      </StatusBar>
    </Window>
  );
}
